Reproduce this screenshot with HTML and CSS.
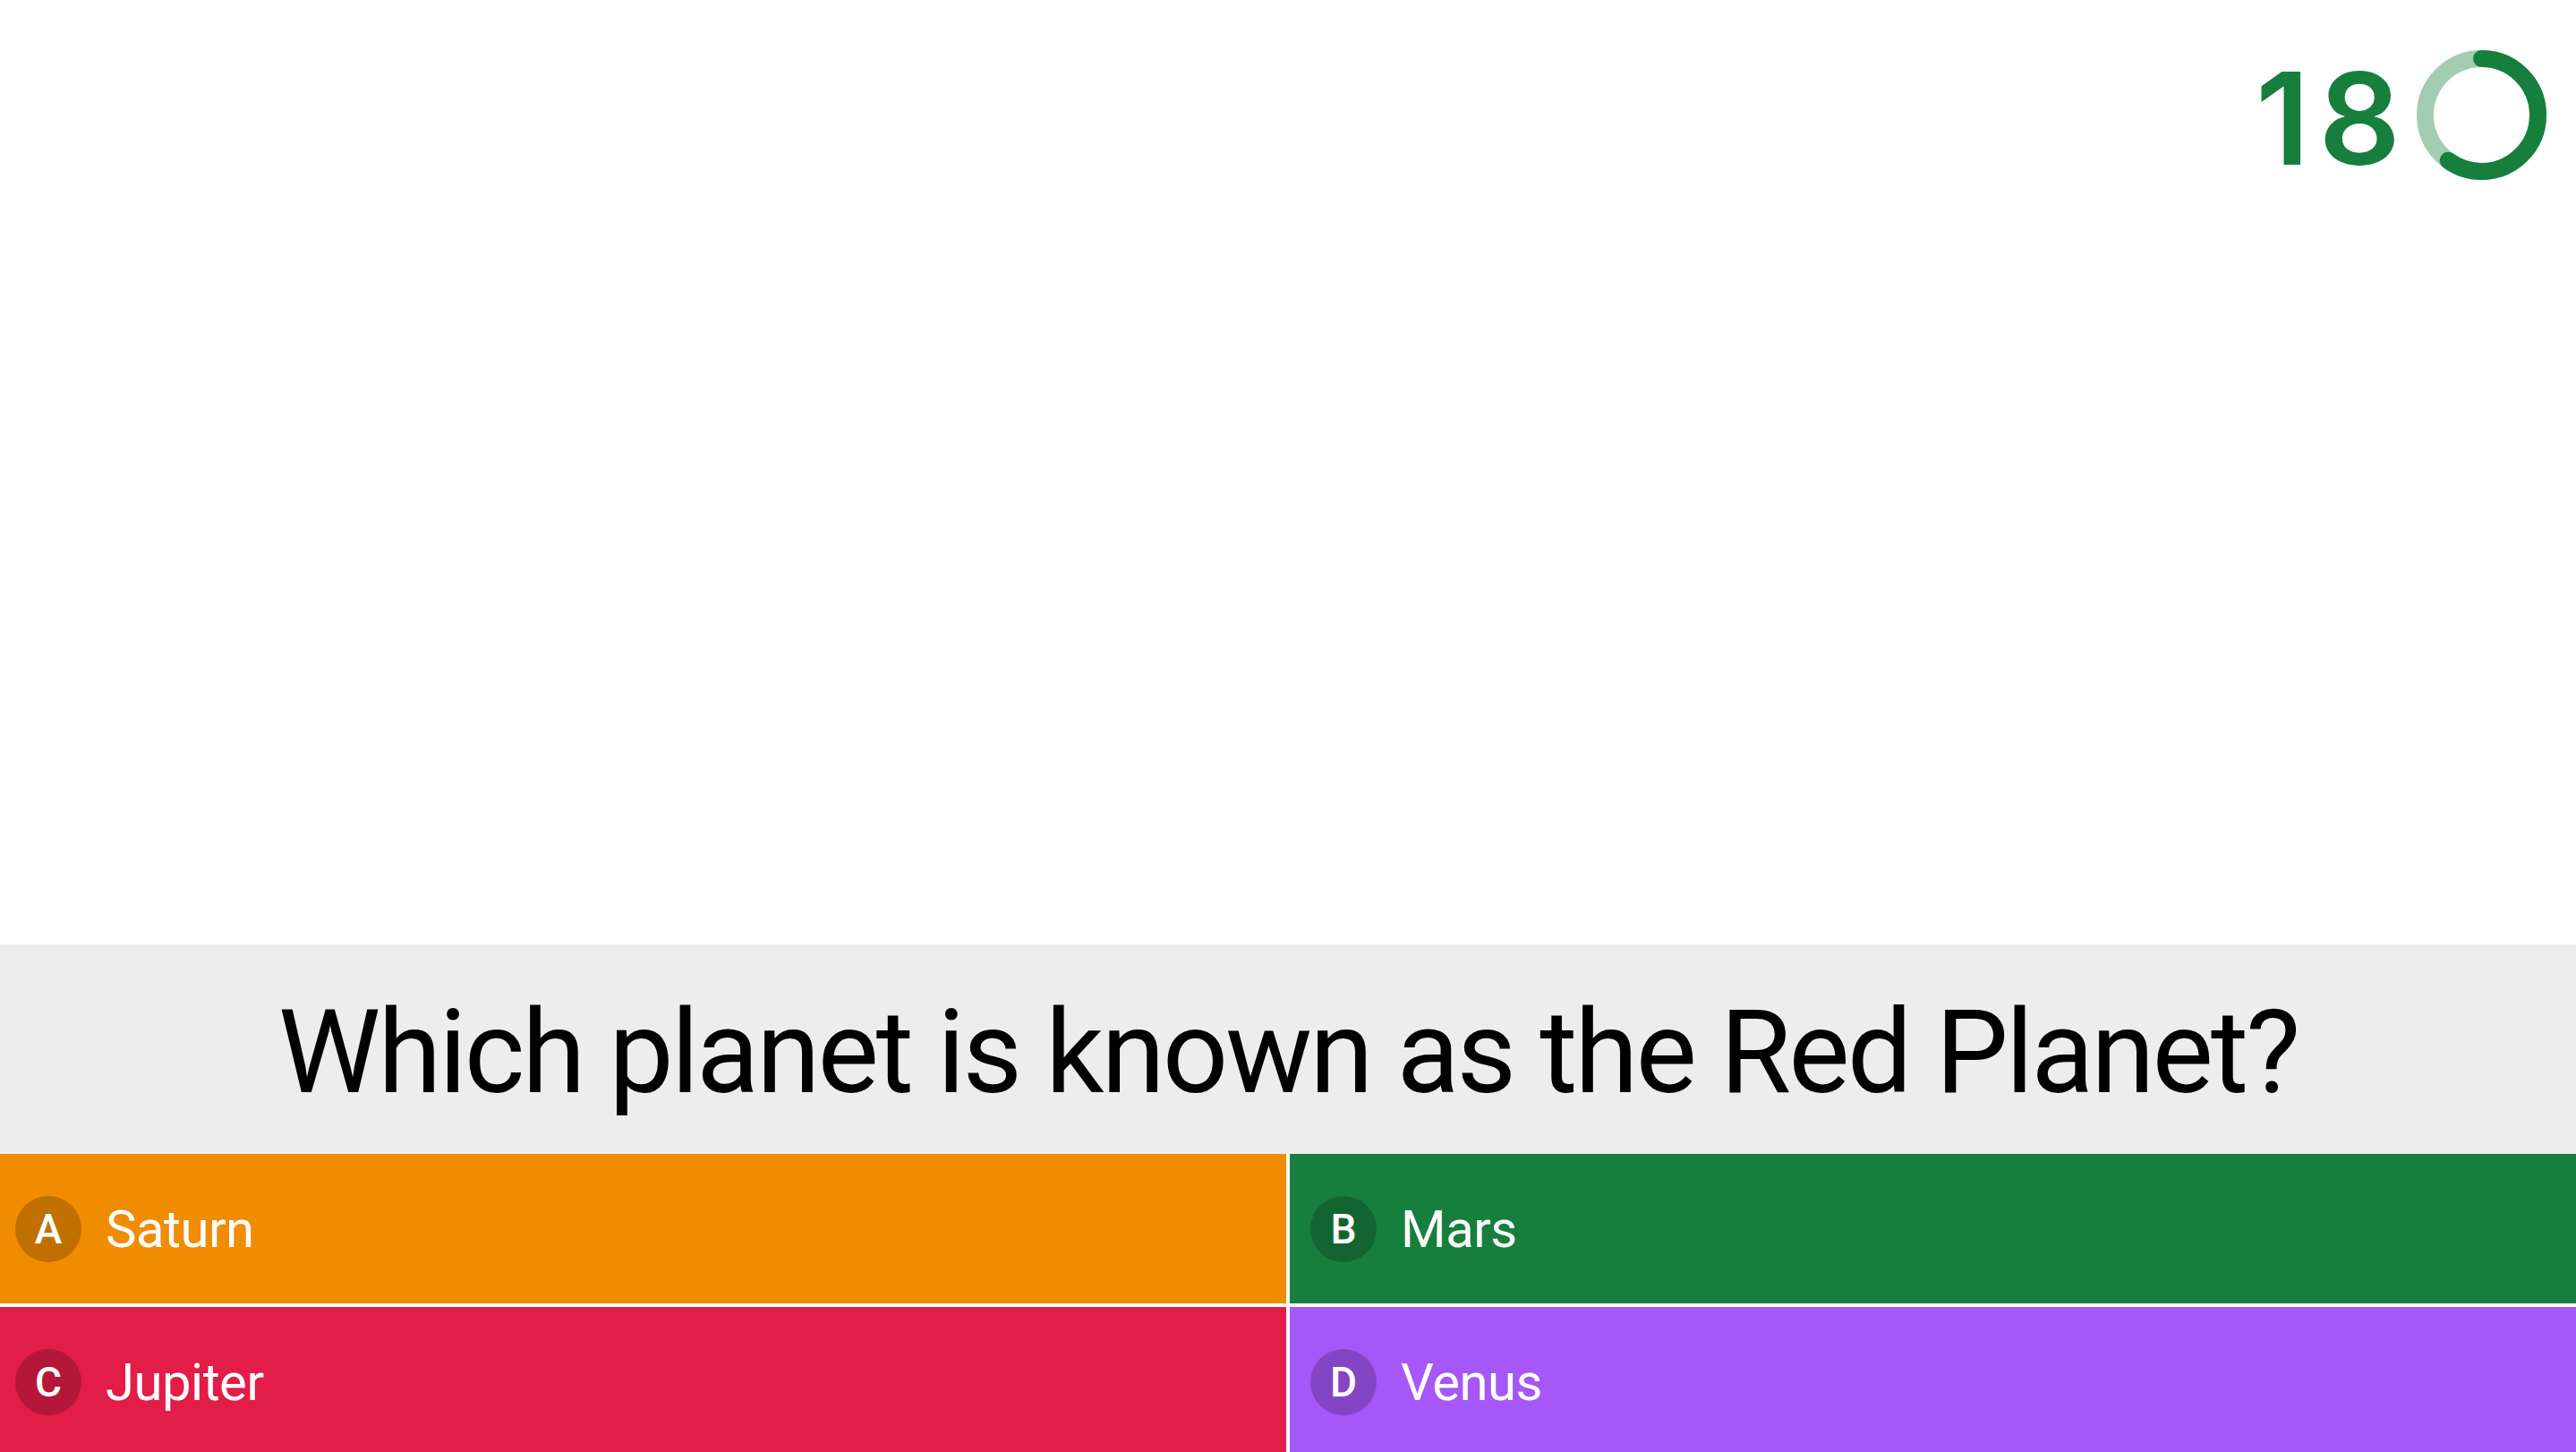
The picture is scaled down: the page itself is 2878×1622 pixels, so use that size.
FILE: index.html
```html
<!DOCTYPE html>
<html lang="en">
<head>
  <meta charset="UTF-8">
  <title>Quiz</title>
  <link rel="stylesheet" href="styles.css">
</head>
<body>

  <div class="stage">
    <div class="timer">
      <span class="timer-count">18</span>
      <svg class="timer-ring" width="145" height="145" viewBox="0 0 145 145">
        <circle class="ring-track" cx="72.5" cy="72.5" r="63" />
        <circle class="ring-progress" cx="72.5" cy="72.5" r="63" stroke-dasharray="237.5 395.8" transform="rotate(-90 72.5 72.5)" />
      </svg>
    </div>
  </div>

  <div class="question">
    <h1>Which planet is known as the Red Planet?</h1>
  </div>

  <div class="answers">
    <div class="answer orange"><span class="letter">A</span><span class="text">Saturn</span></div>
    <div class="answer green"><span class="letter">B</span><span class="text">Mars</span></div>
    <div class="answer red"><span class="letter">C</span><span class="text">Jupiter</span></div>
    <div class="answer purple"><span class="letter">D</span><span class="text">Venus</span></div>
  </div>

</body>
</html>
```

FILE: styles.css
```css
html, body {
  margin: 0;
  height: 100%;
  overflow: hidden;
}
body {
  font-family: Roboto, 'Liberation Sans', sans-serif;
  background: #fff;
  display: flex;
  flex-direction: column;
}
.stage {
  height: 1055px;
  flex-shrink: 0;
  box-sizing: border-box;
  padding: 54px 33px 0 0;
}
.timer {
  display: flex;
  justify-content: flex-end;
  align-items: center;
  gap: 8px;
}
.timer-count {
  font-family: Inter, sans-serif;
  font-weight: 600;
  font-size: 143px;
  line-height: 1;
  color: #177f3e;
  letter-spacing: 10px;
  margin-top: 6px;
}
.timer-ring circle {
  fill: none;
  stroke-width: 19;
}
.ring-track { stroke: #a3cdb3; }
.ring-progress {
  stroke: #177f3e;
  stroke-linecap: round;
}
.question {
  height: 234px;
  flex-shrink: 0;
  box-sizing: border-box;
  padding-top: 6px;
  background: #ededed;
  display: flex;
  align-items: center;
  justify-content: center;
}
.question h1 {
  margin: 0;
  font-weight: 400;
  font-size: 129px;
  line-height: 1;
  color: #000;
  letter-spacing: -3px;
}
.answers {
  display: grid;
  grid-template-columns: 1fr 1fr;
  grid-template-rows: 167px 167px;
  gap: 4px;
  background: #fff;
}
.answer {
  display: flex;
  align-items: center;
  padding-left: 17px;
  color: #fff;
}
.answer:nth-child(even) { padding-left: 23px; }
.orange { background: #f08c00; }
.green { background: #177f3e; }
.red { background: #e21d48; }
.purple { background: #a557f7; }
.letter {
  width: 74px;
  height: 74px;
  border-radius: 50%;
  background: rgba(0, 0, 0, 0.2);
  display: flex;
  align-items: center;
  justify-content: center;
  font-size: 46px;
  font-weight: 500;
}
.text {
  margin-left: 27px;
  font-size: 58px;
  letter-spacing: -0.5px;
}
```
